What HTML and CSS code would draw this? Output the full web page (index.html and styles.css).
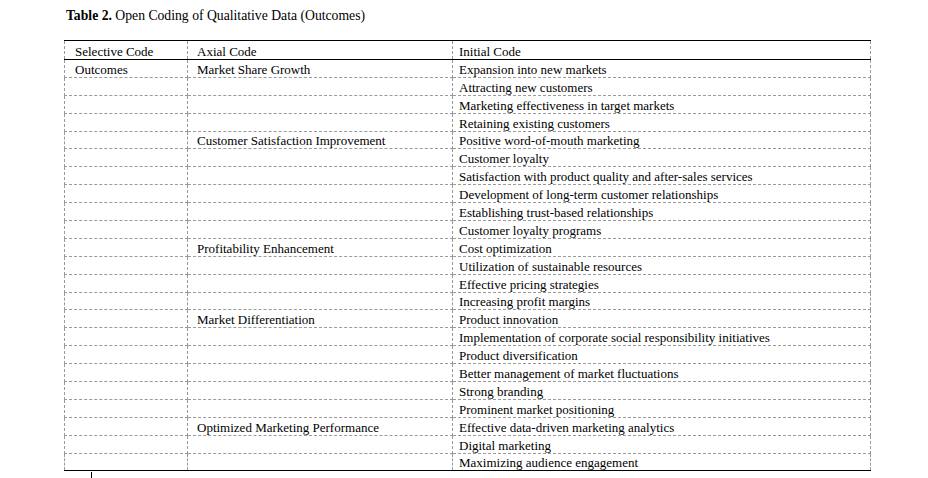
FILE: index.html
```html
<!DOCTYPE html>
<html lang="en">
<head>
<meta charset="utf-8">
<title>Table 2. Open Coding of Qualitative Data (Outcomes)</title>
<link rel="stylesheet" href="styles.css">
</head>
<body>
<div class="page">
  <p class="caption"><b>Table 2.</b> Open Coding of Qualitative Data (Outcomes)</p>
  <table class="coding">
    <colgroup>
      <col class="c1">
      <col class="c2">
      <col class="c3">
    </colgroup>
    <thead>
      <tr><th class="sel">Selective Code</th><th class="ax">Axial Code</th><th>Initial Code</th></tr>
    </thead>
    <tbody>
      <tr><td class="sel">Outcomes</td><td class="ax">Market Share Growth</td><td>Expansion into new markets</td></tr>
      <tr><td class="sel"></td><td class="ax"></td><td>Attracting new customers</td></tr>
      <tr><td class="sel"></td><td class="ax"></td><td>Marketing effectiveness in target markets</td></tr>
      <tr><td class="sel"></td><td class="ax"></td><td>Retaining existing customers</td></tr>
      <tr><td class="sel"></td><td class="ax">Customer Satisfaction Improvement</td><td>Positive word-of-mouth marketing</td></tr>
      <tr><td class="sel"></td><td class="ax"></td><td>Customer loyalty</td></tr>
      <tr><td class="sel"></td><td class="ax"></td><td>Satisfaction with product quality and after-sales services</td></tr>
      <tr><td class="sel"></td><td class="ax"></td><td>Development of long-term customer relationships</td></tr>
      <tr><td class="sel"></td><td class="ax"></td><td>Establishing trust-based relationships</td></tr>
      <tr><td class="sel"></td><td class="ax"></td><td>Customer loyalty programs</td></tr>
      <tr><td class="sel"></td><td class="ax">Profitability Enhancement</td><td>Cost optimization</td></tr>
      <tr><td class="sel"></td><td class="ax"></td><td>Utilization of sustainable resources</td></tr>
      <tr><td class="sel"></td><td class="ax"></td><td>Effective pricing strategies</td></tr>
      <tr><td class="sel"></td><td class="ax"></td><td>Increasing profit margins</td></tr>
      <tr><td class="sel"></td><td class="ax">Market Differentiation</td><td>Product innovation</td></tr>
      <tr><td class="sel"></td><td class="ax"></td><td>Implementation of corporate social responsibility initiatives</td></tr>
      <tr><td class="sel"></td><td class="ax"></td><td>Product diversification</td></tr>
      <tr><td class="sel"></td><td class="ax"></td><td>Better management of market fluctuations</td></tr>
      <tr><td class="sel"></td><td class="ax"></td><td>Strong branding</td></tr>
      <tr><td class="sel"></td><td class="ax"></td><td>Prominent market positioning</td></tr>
      <tr><td class="sel"></td><td class="ax">Optimized Marketing Performance</td><td>Effective data-driven marketing analytics</td></tr>
      <tr><td class="sel"></td><td class="ax"></td><td>Digital marketing</td></tr>
      <tr><td class="sel"></td><td class="ax"></td><td>Maximizing audience engagement</td></tr>
    </tbody>
  </table>
  <div class="tick"></div>
</div>
</body>
</html>
```

FILE: styles.css
```css
html, body {
  margin: 0;
  padding: 0;
  background: #ffffff;
}

body {
  font-family: "Liberation Serif", "Times New Roman", serif;
  color: #000000;
}

.page {
  width: 928px;
  height: 478px;
  overflow: hidden;
  padding-left: 64px;
  box-sizing: border-box;
}

.caption {
  margin: 0;
  padding: 8px 0 0 2px;
  font-size: 13.7px;
  line-height: 16px;
  height: 16px;
}

.caption b {
  font-weight: bold;
}

.coding {
  margin-top: 16px;
  width: 806px;
  border-collapse: collapse;
  table-layout: fixed;
  font-size: 13px;
}

.c1 { width: 123px; }
.c2 { width: 265px; }
.c3 { width: 418px; }

.coding th,
.coding td {
  border: 1px dashed #9a9a9a;
  padding: 0 0 0 6px;
  text-align: left;
  font-weight: normal;
  line-height: 15px;
  vertical-align: bottom;
  white-space: nowrap;
  overflow: hidden;
}

.coding th.sel,
.coding td.sel {
  padding-left: 10px;
}

.coding th.ax,
.coding td.ax {
  padding-left: 9px;
}

.coding thead th {
  border-top: 1px solid #000000;
  border-bottom: 1px solid #000000;
  height: 19px;
  box-sizing: border-box;
}

.coding tbody tr {
  height: 17.9px;
}

.coding tbody tr:last-child td {
  border-bottom: 1px solid #000000;
}

.tick {
  width: 1px;
  height: 7px;
  margin-left: 27px;
  margin-top: 1px;
  background: #000000;
}
```
